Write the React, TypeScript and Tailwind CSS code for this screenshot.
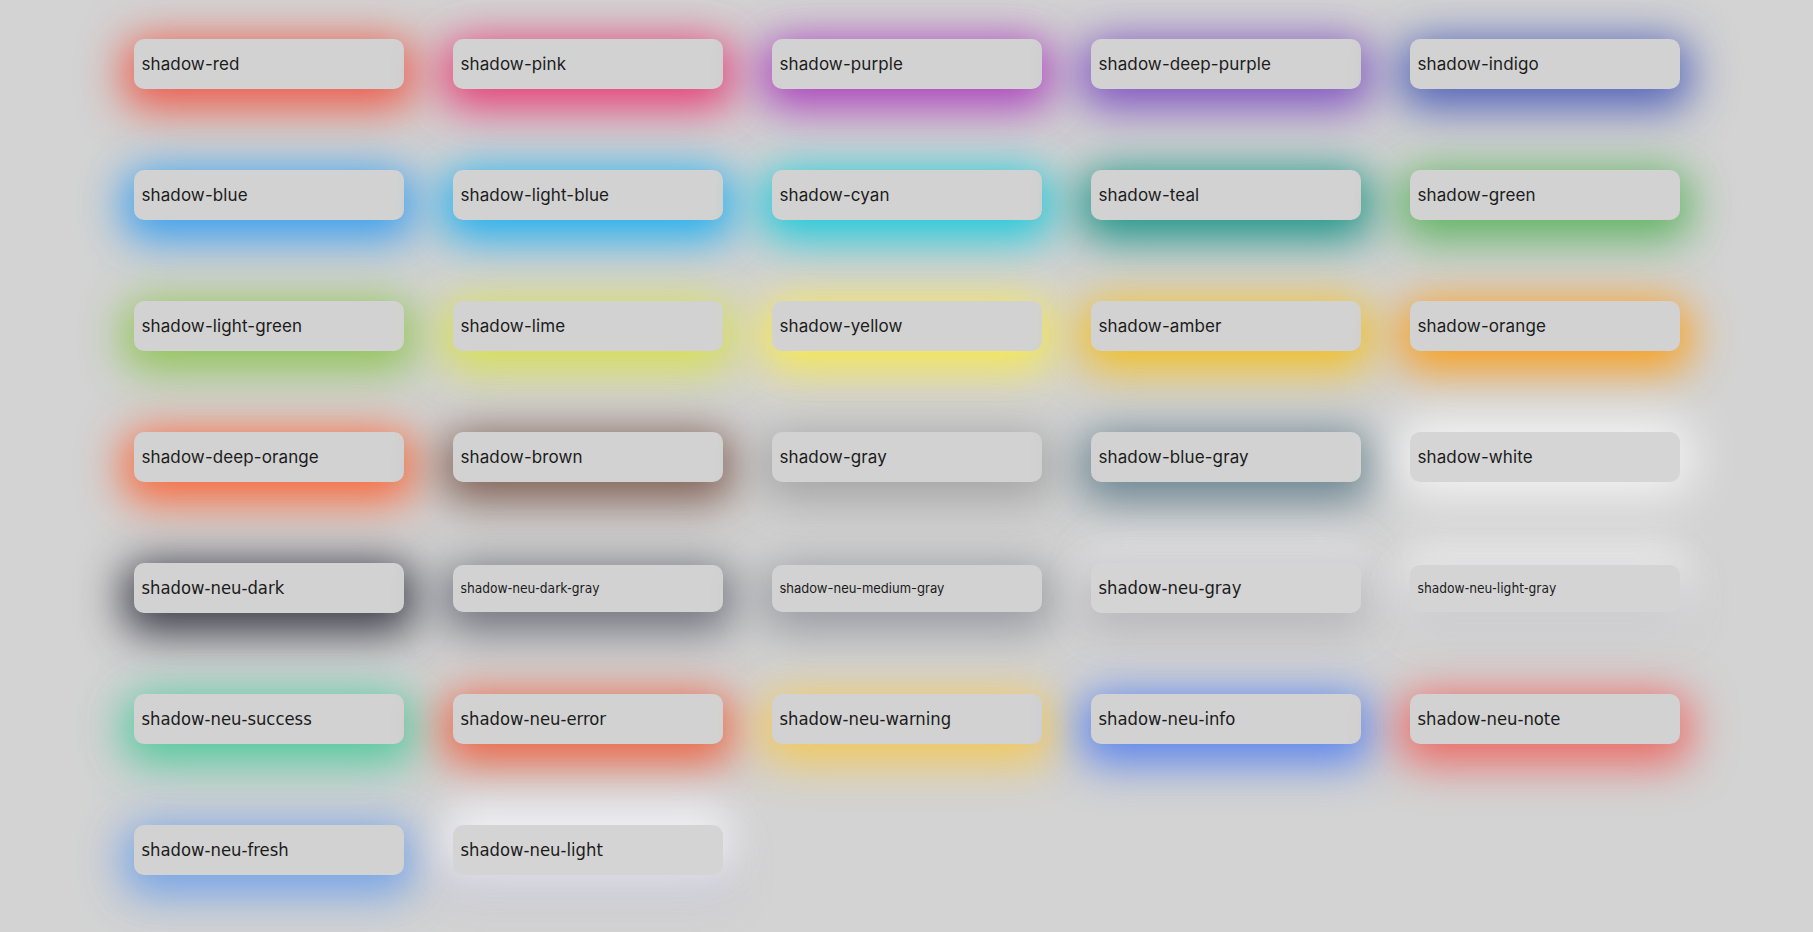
const geo = "font-['Inter','Liberation_Sans',sans-serif] text-[17px] leading-[26px] tracking-[0.1px]";
const geoSmall = "font-['Inter','Liberation_Sans',sans-serif] text-[13px] leading-[23px]";
const narrow = "font-['Liberation_Sans_Narrow','DejaVu_Sans_Condensed',sans-serif] text-[18.3px] leading-[26px]";
const narrowSmall = "font-['Liberation_Sans_Narrow','DejaVu_Sans_Condensed',sans-serif] text-[13.7px] leading-[23px]";

const cards = [
  { name: 'shadow-red', font: geo, shadow: 'shadow-[0_10px_44px_10px_rgba(240,80,62,0.9)]' },
  { name: 'shadow-pink', font: geo, shadow: 'shadow-[0_10px_44px_10px_rgba(233,40,105,0.85)]' },
  { name: 'shadow-purple', font: geo, shadow: 'shadow-[0_10px_44px_10px_rgba(165,45,185,0.85)]' },
  { name: 'shadow-deep-purple', font: geo, shadow: 'shadow-[0_10px_44px_10px_rgba(115,65,190,0.85)]' },
  { name: 'shadow-indigo', font: geo, shadow: 'shadow-[0_10px_44px_10px_rgba(63,81,181,0.85)]' },
  { name: 'shadow-blue', font: geo, shadow: 'shadow-[0_10px_44px_10px_rgba(33,150,243,0.85)]' },
  { name: 'shadow-light-blue', font: geo, shadow: 'shadow-[0_10px_44px_10px_rgba(3,169,244,0.85)]' },
  { name: 'shadow-cyan', font: geo, shadow: 'shadow-[0_10px_44px_10px_rgba(0,200,220,0.85)]' },
  { name: 'shadow-teal', font: geo, shadow: 'shadow-[0_10px_44px_10px_rgba(0,140,125,0.85)]' },
  { name: 'shadow-green', font: geo, shadow: 'shadow-[0_10px_44px_10px_rgba(76,175,80,0.85)]' },
  { name: 'shadow-light-green', font: geo, shadow: 'shadow-[0_10px_44px_10px_rgba(139,195,74,0.9)]' },
  { name: 'shadow-lime', font: geo, shadow: 'shadow-[0_10px_44px_10px_rgba(215,225,70,0.9)]' },
  { name: 'shadow-yellow', font: geo, shadow: 'shadow-[0_10px_44px_10px_rgba(250,235,70,0.9)]' },
  { name: 'shadow-amber', font: geo, shadow: 'shadow-[0_10px_44px_10px_rgba(245,190,20,0.9)]' },
  { name: 'shadow-orange', font: geo, shadow: 'shadow-[0_10px_44px_10px_rgba(255,152,0,0.85)]' },
  { name: 'shadow-deep-orange', font: geo, shadow: 'shadow-[0_10px_44px_10px_rgba(255,87,34,0.85)]' },
  { name: 'shadow-brown', font: geo, shadow: 'shadow-[0_10px_44px_10px_rgba(121,85,72,0.9)]' },
  { name: 'shadow-gray', font: geo, shadow: 'shadow-[0_10px_44px_10px_rgba(158,158,158,0.85)]' },
  { name: 'shadow-blue-gray', font: geo, shadow: 'shadow-[0_10px_44px_10px_rgba(96,125,139,0.9)]' },
  { name: 'shadow-white', font: geo, shadow: 'shadow-[0_0_50px_12px_rgba(255,255,255,0.8)]', bg: 'bg-[#d5d5d5]' },
  { name: 'shadow-neu-dark', font: narrow, shadow: 'shadow-[0_10px_44px_10px_rgba(45,47,60,0.9)]' },
  { name: 'shadow-neu-dark-gray', font: narrowSmall, shadow: 'shadow-[0_10px_44px_10px_rgba(90,92,105,0.8)]' },
  { name: 'shadow-neu-medium-gray', font: geoSmall, shadow: 'shadow-[0_10px_44px_10px_rgba(140,142,150,0.8)]' },
  { name: 'shadow-neu-gray', font: narrow, shadow: 'shadow-[0_12px_40px_6px_rgba(175,175,182,0.85),0_-12px_40px_4px_rgba(235,235,238,0.85)]', bg: 'bg-[#d4d4d4]' },
  { name: 'shadow-neu-light-gray', font: narrowSmall, shadow: 'shadow-[0_12px_40px_6px_rgba(200,200,204,0.85),0_-12px_40px_6px_rgba(245,245,245,0.9)]', bg: 'bg-[#d4d4d4]' },
  { name: 'shadow-neu-success', font: narrow, shadow: 'shadow-[0_10px_44px_10px_rgba(61,200,150,0.85)]' },
  { name: 'shadow-neu-error', font: narrow, shadow: 'shadow-[0_10px_44px_10px_rgba(238,90,55,0.9)]' },
  { name: 'shadow-neu-warning', font: narrow, shadow: 'shadow-[0_10px_44px_10px_rgba(245,200,80,0.9)]' },
  { name: 'shadow-neu-info', font: narrow, shadow: 'shadow-[0_10px_44px_10px_rgba(80,125,240,0.9)]' },
  { name: 'shadow-neu-note', font: narrow, shadow: 'shadow-[0_10px_44px_10px_rgba(238,95,90,0.9)]' },
  { name: 'shadow-neu-fresh', font: narrow, shadow: 'shadow-[0_10px_44px_10px_rgba(100,155,235,0.85)]' },
  { name: 'shadow-neu-light', font: narrow, shadow: 'shadow-[0_-12px_44px_8px_rgba(245,245,248,0.9),0_14px_44px_8px_rgba(198,198,214,0.95)]', bg: 'bg-[#d4d4d4]' },
];

function ShadowCard({ name, font, shadow, bg }: { name: string; font: string; shadow: string; bg?: string }) {
  return (
    <div className={`w-[270px] rounded-[10px] px-2 py-3 text-[#1c1c1c] ${bg ?? 'bg-[#d2d2d2]'} ${shadow}`}>
      <span className={`block ${font}`}>{name}</span>
    </div>
  );
}

export default function App() {
  return (
    <div className="min-h-screen bg-[#d3d3d3] pt-[39px] pb-6">
      <div className="grid grid-cols-[repeat(5,270px)] auto-rows-[50px] items-center justify-center gap-x-[49px] gap-y-[81px]">
        {cards.map((c) => (
          <ShadowCard key={c.name} {...c} />
        ))}
      </div>
    </div>
  );
}
